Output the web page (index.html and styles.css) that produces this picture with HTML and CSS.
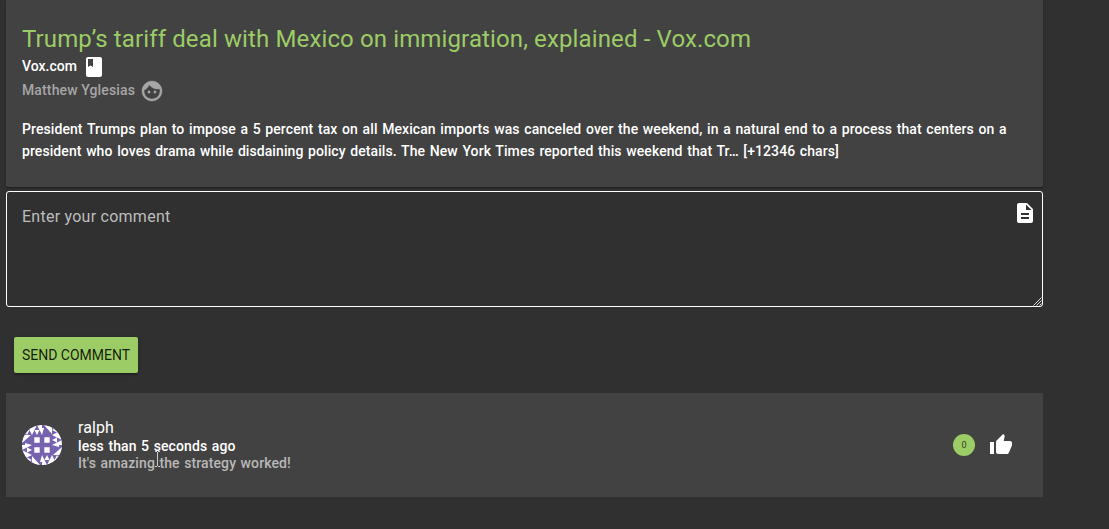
FILE: index.html
```html
<!DOCTYPE html>
<html lang="en">
<head>
<meta charset="utf-8">
<title>Article comments</title>
<link rel="stylesheet" href="styles.css">
</head>
<body>
<main class="page">
  <article class="card article">
    <h1 class="title"><span>Trump’s tariff deal with Mexico on immigration, explained - Vox.com</span></h1>
    <div class="meta source"><span>Vox.com</span>
      <svg class="icon" viewBox="0 0 24 24"><path d="M18 2H6c-1.100 0-2 .9-2 2v16c0 1.100.9 2 2 2h12c1.100 0 2-.9 2-2V4c0-1.100-.9-2-2-2zM6 4h5v8l-2.500-1.500L6 12V4z"/></svg>
    </div>
    <div class="meta author"><span>Matthew Yglesias</span>
      <svg class="icon face" viewBox="0 0 24 24"><path d="M9 11.750c-.69 0-1.250.56-1.250 1.250s.56 1.250 1.250 1.250 1.250-.56 1.250-1.250-.56-1.250-1.250-1.250zm6 0c-.69 0-1.250.56-1.250 1.250s.56 1.250 1.250 1.250 1.250-.56 1.250-1.250-.56-1.250-1.250-1.250zM12 2C6.480 2 2 6.480 2 12s4.480 10 10 10 10-4.480 10-10S17.520 2 12 2zm0 18c-4.410 0-8-3.590-8-8 0-.29.02-.58.05-.86 2.360-1.050 4.230-2.980 5.210-5.370C11.070 8.330 14.050 10 17.420 10c.78 0 1.530-.09 2.250-.26.21.71.33 1.470.33 2.260 0 4.410-3.590 8-8 8z"/></svg>
    </div>
    <p class="body"><span class="line">President Trumps plan to impose a 5 percent tax on all Mexican imports was canceled over the weekend, in a natural end to a process that centers on a</span> <span class="line">president who loves drama while disdaining policy details. The New York Times reported this weekend that Tr… [+12346 chars]</span></p>
  </article>
  <div class="field">
    <textarea class="input" placeholder="Enter your comment"></textarea>
    <svg class="icon note" viewBox="0 0 24 24"><path d="M14 2H6c-1.100 0-1.990.9-1.990 2L4 20c0 1.100.89 2 1.990 2H18c1.100 0 2-.9 2-2V8l-6-6zm2 16H8v-2h8v2zm0-4H8v-2h8v2zm-3-5V3.500L18.500 9H13z"/></svg>
    <svg class="grip" viewBox="0 0 9 9"><path d="M.5 8.500l8-8M3.500 8.500l5-5M6.500 8.500l2-2"/></svg>
  </div>
  <button class="send"><span>SEND COMMENT</span></button>
  <section class="card comment">
    <svg class="avatar" viewBox="0 0 40 40">
      <defs>
        <clipPath id="round"><circle cx="20" cy="20" r="20"/></clipPath>
        <g id="tri"><path class="white" d="M0 0h10v10H0z"/><path class="violet" d="M5 0L7.500 5h-5zM2.500 5L5 10H0zM7.500 5L10 10H5z"/></g>
        <g id="side"><use href="#tri"/><use href="#tri" x="10"/><path class="white" d="M22 0h8v9zM20 3l2 0-2 7z"/></g>
      </defs>
      <g clip-path="url(#round)">
        <path class="violet" d="M0 0h40v40H0z"/>
        <use href="#side"/>
        <use href="#side" transform="rotate(90 20 20)"/>
        <use href="#side" transform="rotate(180 20 20)"/>
        <use href="#side" transform="rotate(270 20 20)"/>
        <path class="white" d="M12.300 12.300h5.400v5.400h-5.400zM22.300 12.300h5.400v5.400h-5.400zM12.300 22.300h5.400v5.400h-5.400zM22.300 22.300h5.400v5.400h-5.400z"/>
      </g>
    </svg>
    <div class="text">
      <div class="name"><span>ralph</span></div>
      <div class="time"><span>less than 5 seconds ago</span></div>
      <div class="message"><span>It's amazing the strategy worked!</span></div>
      <svg class="caret" viewBox="0 0 7 16"><path d="M1 .5h2M4 .5h2M3.500 1v14M1 15.500h2M4 15.500h2"/></svg>
    </div>
    <span class="badge">0</span>
    <svg class="icon like" viewBox="0 0 24 24"><path d="M1 21h4V9H1v12zm22-11c0-1.100-.9-2-2-2h-6.310l.95-4.570.03-.32c0-.41-.17-.79-.44-1.060L14.170 1 7.590 7.590C7.220 7.950 7 8.450 7 9v10c0 1.100.9 2 2 2h9c.83 0 1.540-.5 1.840-1.220l3.020-7.050c.09-.23.14-.47.14-.73v-2z"/></svg>
  </section>
</main>
</body>
</html>
```
FILE: styles.css
```css
* { box-sizing: border-box; }
html, body { margin: 0; height: 100%; overflow: hidden; }
body { background: #303030; color: #fff; font-family: Roboto, sans-serif; }
.page { width: 1043px; padding-left: 6px; }
.card { background: #424242; }
.article { height: 187px; padding: 23px 16px 0; border-radius: 0 0 2px 2px; box-shadow: 0 2px 1px -1px rgba(0,0,0,.2), 0 1px 1px rgba(0,0,0,.14), 0 1px 3px rgba(0,0,0,.12); }
.title { margin: 0; font-size: 24px; line-height: 32px; font-weight: 400; color: #9ccc65; white-space: nowrap; letter-spacing: .125px; }
.meta { display: flex; align-items: center; height: 24px; font-size: 14px; font-weight: 500; }
.meta span { padding-bottom: 2px; }
.source { gap: 5px; }
.author { gap: 5px; color: #a6a6a6; letter-spacing: .13px; }
.icon { display: block; flex: none; width: 24px; height: 24px; fill: currentColor; }
.face { stroke: currentColor; stroke-width: .4; }
.body { margin: 15px 0 0; font-size: 14px; font-weight: 500; line-height: 22px; letter-spacing: .08px; word-spacing: 1.07px; white-space: nowrap; }
.line { display: block; width: max-content; }
.field { position: relative; height: 116px; margin-top: 4px; }
.input { display: block; width: 100%; height: 116px; padding: 15px; resize: none; outline: 0; background: transparent; border: 1px solid #fff; border-radius: 3px; font: 400 16px/19px Roboto, sans-serif; letter-spacing: .25px; color: #fff; }
.input::placeholder { color: #bdbdbd; opacity: 1; }
.note { position: absolute; top: 10px; right: 6px; }
.grip { position: absolute; right: 1px; bottom: 1px; width: 9px; height: 9px; fill: none; stroke: #ddd; stroke-width: 1; }
.send { display: block; width: 124px; height: 36px; margin: 30px 0 20px 8px; padding: 0; border: 0; border-radius: 2px; background: #9ccc65; color: rgba(0,0,0,.87); font: 400 14px/36px Roboto, sans-serif; white-space: nowrap; box-shadow: 0 3px 1px -2px rgba(0,0,0,.2), 0 2px 2px rgba(0,0,0,.14), 0 1px 5px rgba(0,0,0,.12); }
.comment { display: flex; align-items: center; height: 104px; padding: 0 30px 0 16px; }
.avatar { width: 40px; height: 40px; }
.violet { fill: #7662ae; }
.white { fill: #fff; }
.text { position: relative; flex: 1; margin-left: 16px; white-space: nowrap; }
.name { padding-bottom: 2px; font-size: 16px; font-weight: 400; line-height: 17px; letter-spacing: .1px; }
.time, .message { font-size: 14px; font-weight: 500; line-height: 17px; letter-spacing: .11px; word-spacing: .9px; }
.message { color: #b8b8b8; }
.caret { position: absolute; left: 76px; top: 32px; width: 7px; height: 16px; fill: none; stroke: #ccc; }
.badge { width: 22px; height: 22px; margin-right: 14px; border-radius: 50%; background: #9ccc65; color: rgba(0,0,0,.75); font-size: 9px; line-height: 22px; text-align: center; }
```
